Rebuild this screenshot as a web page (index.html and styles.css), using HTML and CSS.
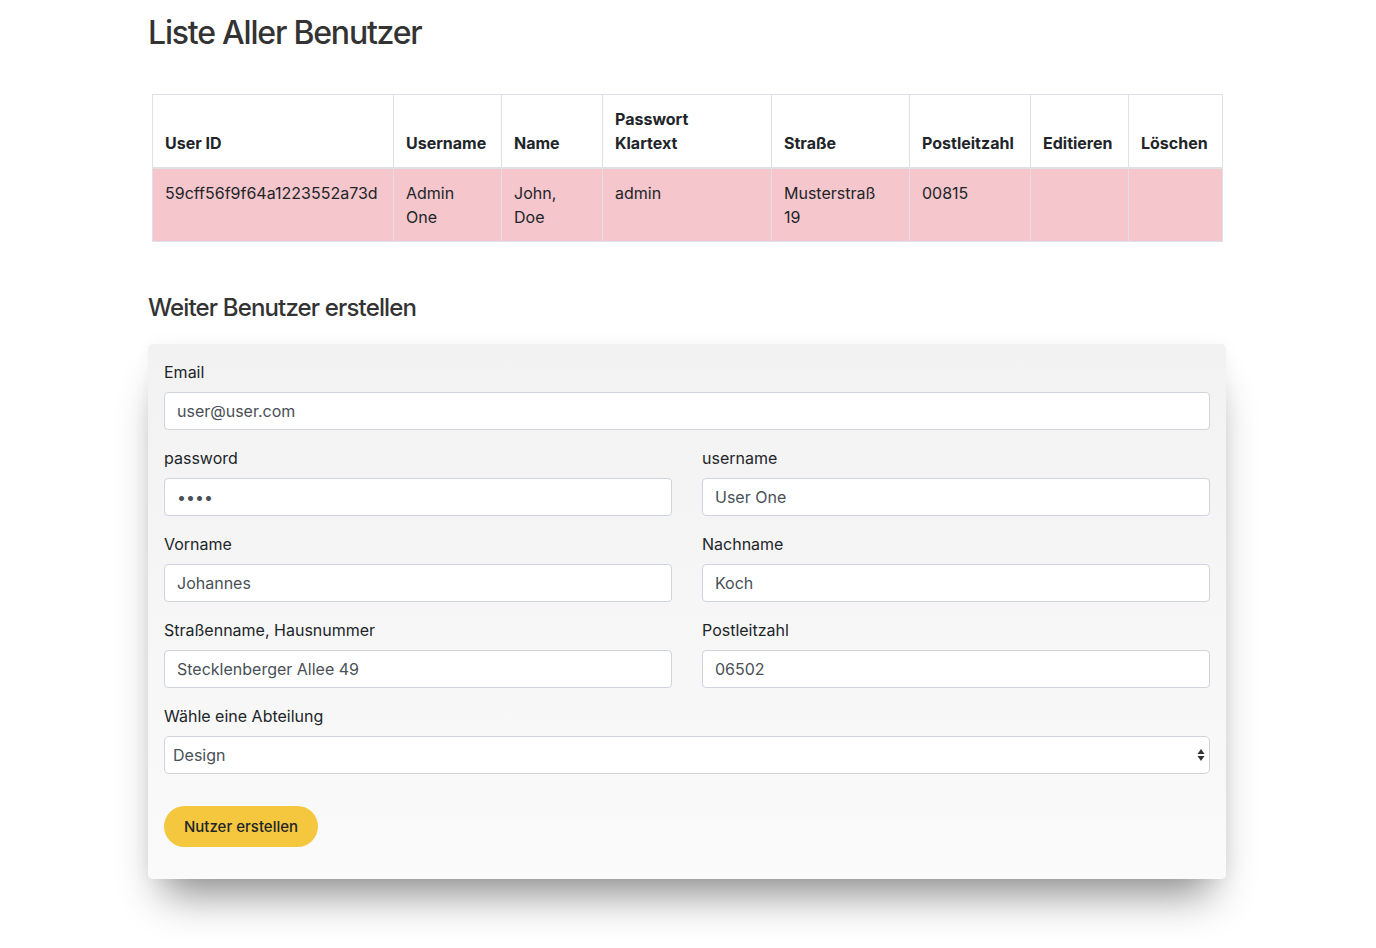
FILE: index.html
```html
<!DOCTYPE html>
<html lang="de">
<head>
<meta charset="utf-8">
<title>Liste Aller Benutzer</title>
<link rel="stylesheet" href="styles.css">
</head>
<body>
<div class="container">
  <h1 class="page-title">Liste Aller Benutzer</h1>

  <div class="table-wrap">
    <table class="user-table">
      <colgroup>
        <col class="c-id"><col class="c-user"><col class="c-name"><col class="c-pw">
        <col class="c-street"><col class="c-zip"><col class="c-edit"><col class="c-del">
      </colgroup>
      <thead>
        <tr>
          <th>User ID</th>
          <th>Username</th>
          <th>Name</th>
          <th>Passwort<br>Klartext</th>
          <th>Straße</th>
          <th>Postleitzahl</th>
          <th>Editieren</th>
          <th>Löschen</th>
        </tr>
      </thead>
      <tbody>
        <tr class="row-danger">
          <td>59cff56f9f64a1223552a73d</td>
          <td>Admin<br>One</td>
          <td>John,<br>Doe</td>
          <td>admin</td>
          <td>Musterstraß<br>19</td>
          <td>00815</td>
          <td></td>
          <td></td>
        </tr>
      </tbody>
    </table>
  </div>

  <h2 class="section-title">Weiter Benutzer erstellen</h2>

  <form class="form-card">
    <div class="form-group">
      <label class="label">Email</label>
      <input class="input" type="text" value="user@user.com">
    </div>
    <div class="form-row">
      <div class="form-group">
        <label class="label">password</label>
        <input class="input" type="password" value="1234">
      </div>
      <div class="form-group">
        <label class="label">username</label>
        <input class="input" type="text" value="User One">
      </div>
    </div>
    <div class="form-row">
      <div class="form-group">
        <label class="label">Vorname</label>
        <input class="input" type="text" value="Johannes">
      </div>
      <div class="form-group">
        <label class="label">Nachname</label>
        <input class="input" type="text" value="Koch">
      </div>
    </div>
    <div class="form-row">
      <div class="form-group">
        <label class="label">Straßenname, Hausnummer</label>
        <input class="input" type="text" value="Stecklenberger Allee 49">
      </div>
      <div class="form-group">
        <label class="label">Postleitzahl</label>
        <input class="input" type="text" value="06502">
      </div>
    </div>
    <div class="form-group">
      <label class="label">Wähle eine Abteilung</label>
      <div class="select-wrap">
        <select class="select">
          <option>Design</option>
          <option>Entwicklung</option>
          <option>Marketing</option>
        </select>
        <svg class="select-arrows" width="8" height="14" viewBox="0 0 8 14">
          <path d="M4 1 L7.5 6 H0.5 Z" fill="#333"/>
          <path d="M4 13 L7.5 8 H0.5 Z" fill="#333"/>
        </svg>
      </div>
    </div>
    <button class="btn-create" type="button">Nutzer erstellen</button>
  </form>
</div>
</body>
</html>
```

FILE: styles.css
```css
* { box-sizing: border-box; }

html, body {
  margin: 0;
  padding: 0;
  background: #fff;
}

body {
  font-family: Inter, "Noto Sans", "Liberation Sans", sans-serif;
  font-size: 16px;
  line-height: 1.5;
  color: #212529;
}

.container {
  width: 1078px;
  margin-left: calc(50% - 540px);
  padding-top: 14px;
  padding-bottom: 60px;
}

.page-title {
  margin: 0;
  font-size: 32px;
  line-height: 1.2;
  font-weight: 500;
  color: #333;
  letter-spacing: -1.2px;
}

.table-wrap {
  margin: 42px 4px 0;
}

.user-table {
  width: 1070px;
  table-layout: fixed;
  border-collapse: collapse;
}

.c-id { width: 241px; }
.c-user { width: 108px; }
.c-name { width: 101px; }
.c-pw { width: 169px; }
.c-street { width: 138px; }
.c-zip { width: 121px; }
.c-edit { width: 98px; }
.c-del { width: 94px; }

.user-table th,
.user-table td {
  border: 1px solid #dee2e6;
  padding: 12px;
  text-align: left;
  white-space: nowrap;
}

.user-table th {
  vertical-align: bottom;
  font-weight: 700;
  border-bottom-width: 2px;
  color: #212529;
}

.user-table td {
  vertical-align: top;
}

.row-danger td {
  background: #f5c6cb;
}

.section-title {
  margin: 52px 0 21px;
  font-size: 24px;
  line-height: 1.2;
  font-weight: 500;
  color: #333;
  letter-spacing: -0.85px;
}

.form-card {
  background: linear-gradient(#f2f2f2, #fafafa);
  border-radius: 5px;
  padding: 16px 16px 32px;
  box-shadow: 0 30px 40px -15px rgba(0, 0, 0, 0.45), 0 0 18px rgba(0, 0, 0, 0.04);
}

.form-group {
  margin-bottom: 16px;
}

.form-row {
  display: grid;
  grid-template-columns: 1fr 1fr;
  column-gap: 30px;
}

.label {
  display: block;
  margin-bottom: 8px;
  color: #212529;
}

.input,
.select {
  display: block;
  width: 100%;
  height: 38px;
  padding: 6px 12px;
  font-family: inherit;
  font-size: 16px;
  line-height: 1.5;
  color: #495057;
  background: #fff;
  border: 1px solid #ced4da;
  border-radius: 4px;
  outline: none;
}

.select-wrap {
  position: relative;
}

.select {
  appearance: none;
  -webkit-appearance: none;
  padding-left: 8px;
  border-radius: 5px;
}

.select-arrows {
  position: absolute;
  right: 5px;
  top: 12px;
  pointer-events: none;
}

.btn-create {
  margin-top: 16px;
  display: inline-block;
  padding: 10px 20px;
  font-family: inherit;
  font-size: 15px;
  line-height: 21px;
  font-weight: 500;
  color: #212529;
  background: #f4c73e;
  border: none;
  border-radius: 999px;
}
```
